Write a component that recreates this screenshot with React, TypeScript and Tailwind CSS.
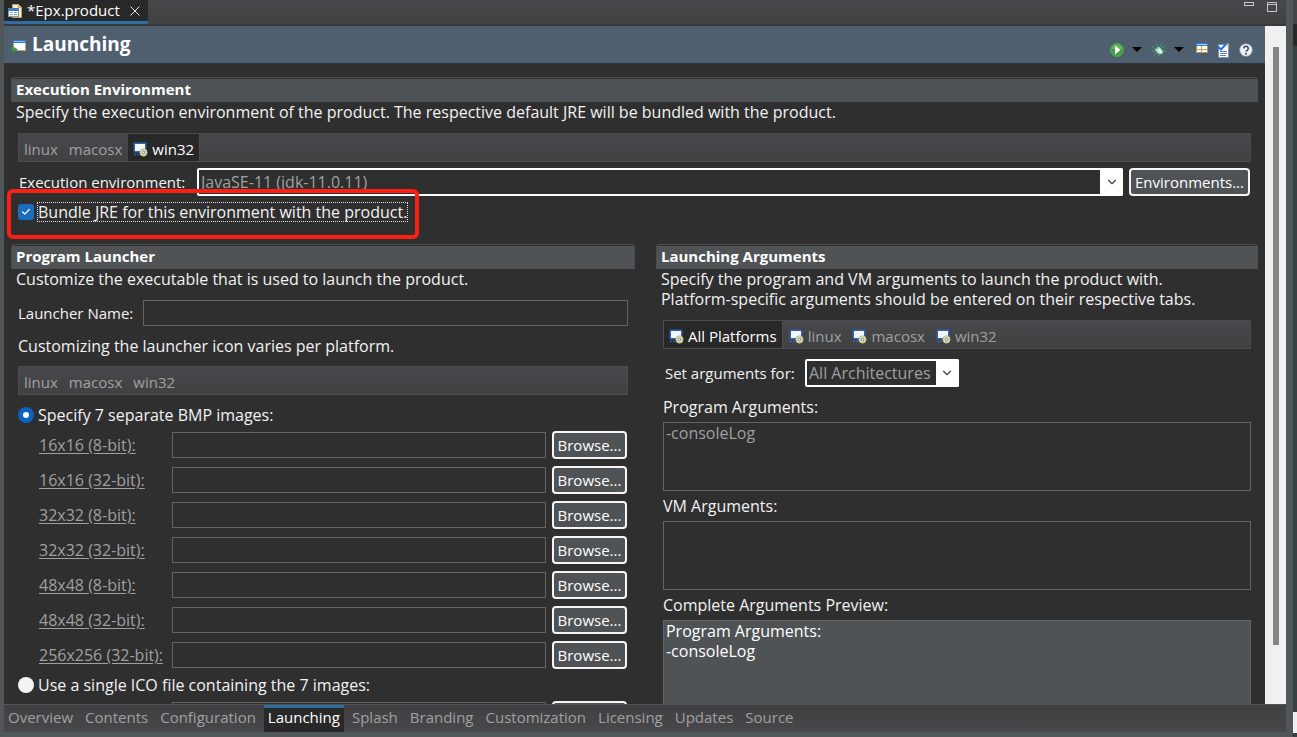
import { useState } from "react";
import type { ReactNode } from "react";
import { Check, ChevronDown } from "lucide-react";
import clsx from "clsx";

const PAGES = [
  "Overview",
  "Contents",
  "Configuration",
  "Launching",
  "Splash",
  "Branding",
  "Customization",
  "Licensing",
  "Updates",
  "Source",
];

const BMP_IMAGES = [
  "16x16 (8-bit):",
  "16x16 (32-bit):",
  "32x32 (8-bit):",
  "32x32 (32-bit):",
  "48x48 (8-bit):",
  "48x48 (32-bit):",
  "256x256 (32-bit):",
];

function ProductFileIcon() {
  return (
    <svg width="15" height="16" viewBox="0 0 15 16" className="shrink-0">
      <path d="M4.5 1.5h6L13.5 4.5V14.5H4.5z" fill="#f4ecd8" stroke="#c9a45c" />
      <path d="M10.5 1.5v3h3" fill="#e2bd72" stroke="#c9a45c" />
      <rect x="0.5" y="5.5" width="10" height="8" fill="#fff" stroke="#7d9cc4" />
      <rect x="0" y="5" width="11" height="3" fill="#3f7cc0" />
      <path d="M2 9.5h3M6 9.5h3M2 11.5h3M6 11.5h3" stroke="#8fa9c8" />
    </svg>
  );
}

function LaunchingIcon() {
  return (
    <svg width="16" height="16" viewBox="0 0 16 16" className="shrink-0">
      <rect x="2.5" y="3.5" width="12" height="10" fill="#fff" stroke="#b8a57a" />
      <rect x="2" y="3" width="13" height="3" fill="#2f79c4" />
      <path d="M3 4.5h11" stroke="#8fc1ee" />
      <path d="M0.5 9v6.500l6-3z" fill="#3f9a4c" stroke="#2d7a3a" strokeWidth="0.5" />
    </svg>
  );
}

function PlatformIcon() {
  return (
    <svg width="15" height="15" viewBox="0 0 15 15" className="shrink-0">
      <rect x="0.5" y="0.5" width="13" height="10" rx="1" fill="#2f62b0" />
      <rect x="2" y="2" width="10" height="7" fill="#f3f7fd" />
      <path d="M1 12.5h6" stroke="#2f62b0" strokeWidth="1.5" strokeDasharray="2 1" />
      <circle cx="10.5" cy="10.5" r="3.7" fill="#ece7a8" stroke="#aaa565" strokeWidth="0.7" />
      <circle cx="10.5" cy="10.5" r="1.4" fill="#fff" stroke="#5278b5" />
    </svg>
  );
}

function RunIcon() {
  return (
    <svg width="14" height="14" viewBox="0 0 14 14">
      <circle cx="7" cy="7" r="6.4" fill="#3fa045" stroke="#4fae55" />
      <path d="M1.5 6a5.6 5.6 0 0 1 11 0z" fill="#7cc46c" opacity="0.6" />
      <path d="M5 2.5v9L10.5 7z" fill="#fff" />
    </svg>
  );
}

function DebugIcon() {
  return (
    <svg width="16" height="16" viewBox="0 0 16 16">
      <path
        d="M6.5 3.500L5.500 0.500M9.500 4.500l1-3.500M3.500 6.500L0.500 4M4.500 9H0.500M5.500 11.500L2.500 13.500M8 12.500v3M11 12.500l2 2M12.500 9h3M11 6l3-2"
        stroke="#5fa890"
        strokeDasharray="1.5 1"
        fill="none"
      />
      <ellipse
        cx="8"
        cy="8.4"
        rx="5"
        ry="3.3"
        transform="rotate(45 8 8.4)"
        fill="#a9dcbf"
        stroke="#2c7a6b"
      />
      <path d="M7.5 7.500l3 3" stroke="#eafbe2" strokeWidth="2" />
      <circle cx="5" cy="5.3" r="1.5" fill="#2c7a6b" />
    </svg>
  );
}

function ExportIcon() {
  return (
    <svg width="16" height="16" viewBox="0 0 16 16">
      <rect x="3.5" y="1.5" width="11" height="9" fill="#fffbe8" stroke="#a99962" />
      <rect x="3" y="1" width="12" height="3" fill="#2f79d0" />
      <path d="M4 2.5h10" stroke="#a9d2f5" />
      <path d="M4 7.5h10M8.5 4v6" stroke="#b3a570" />
      <path d="M0 12.5h3.500M3.500 12v3.500M1 12l2.500 2.500" stroke="#2b69a8" fill="none" />
    </svg>
  );
}

function ValidateIcon() {
  return (
    <svg width="14" height="16" viewBox="0 0 14 16">
      <path d="M1.5 2.5h10v13h-10z" fill="#fff" stroke="#7890b5" />
      <path d="M8 1.5h3.500V5" fill="#e8c67a" stroke="#c9a45c" />
      <path d="M3 9.5h7M3 11.5h7M3 13.5h6" stroke="#6c7fa6" />
      <path d="M1 4.500L4 7.500L10 1" stroke="#1578e6" strokeWidth="2" fill="none" />
    </svg>
  );
}

function HelpIcon() {
  return (
    <svg width="14" height="14" viewBox="0 0 14 14">
      <circle cx="7" cy="7" r="6.3" fill="#f2f3f6" stroke="#8d99b0" strokeWidth="0.8" />
      <path
        d="M4.8 5.4a2.2 2.2 0 1 1 3.4 1.900c-.8.5-1.2.8-1.2 1.500"
        stroke="#3c4a63"
        strokeWidth="1.6"
        fill="none"
      />
      <circle cx="7" cy="10.8" r="1" fill="#3c4a63" />
    </svg>
  );
}

function MenuArrow() {
  return (
    <svg width="10" height="5" viewBox="0 0 10 5">
      <path d="M0 0h10L5 5z" fill="#000" />
    </svg>
  );
}

type SectionProps = {
  title: string;
  description: string;
  children: ReactNode;
};

function Section({ title, description, children }: SectionProps) {
  return (
    <section className="min-w-0">
      <div className="rounded-t-sm border border-b-0 border-[#4a4d4f] pt-px">
        <h2 className="h-[23px] bg-[#4f5355] px-1 text-[15px] leading-5 font-bold text-white">
          {title}
        </h2>
      </div>
      <p className="px-[5px] text-base leading-5 whitespace-pre-line">{description}</p>
      <div className="pt-[11px] pr-[7px] pl-2">{children}</div>
    </section>
  );
}

type PlatformTabsProps = {
  tabs: string[];
  initial?: string;
  icons?: "all" | "selected" | "none";
};

function PlatformTabs({ tabs, initial, icons = "none" }: PlatformTabsProps) {
  const [selected, setSelected] = useState(initial);

  return (
    <div
      role="tablist"
      className="-ml-px flex h-[29px] gap-px border border-[#4c4c50] bg-linear-to-b from-[#48484c] to-[#414143]"
    >
      {tabs.map((tab) => (
        <button
          key={tab}
          role="tab"
          aria-selected={tab === selected}
          onClick={() => setSelected(tab)}
          className={clsx(
            "flex items-center gap-1 px-[5px] pt-1",
            tab === selected
              ? "border-r border-[#4c4c50] bg-[#282828] text-white"
              : "text-[#a0a0a0]"
          )}
        >
          {(icons === "all" || (icons === "selected" && tab === selected)) && (
            <PlatformIcon />
          )}
          {tab}
        </button>
      ))}
    </div>
  );
}

type ComboProps = {
  id: string;
  value: string;
  className?: string;
};

function Combo({ id, value, className }: ComboProps) {
  return (
    <div className={clsx("relative h-7", className)}>
      <select
        id={id}
        className="h-full w-full appearance-none rounded-xs border-2 border-white bg-[#2f2f2f] pl-0.5 text-base text-[#a0a0a0]"
      >
        <option>{value}</option>
      </select>
      <span className="pointer-events-none absolute inset-y-0 right-0 flex w-[23px] items-center justify-center rounded-r-xs bg-white">
        <ChevronDown size={14} strokeWidth={2} className="text-[#444]" />
      </span>
    </div>
  );
}

function PushButton({ children, className }: { children?: ReactNode; className?: string }) {
  return (
    <button
      className={clsx(
        "h-7 shrink-0 rounded-[4px] border-2 border-[#f5f5f5] bg-[#4f5355] text-white",
        className
      )}
    >
      {children}
    </button>
  );
}

function ImageRow({ label }: { label?: string }) {
  return (
    <div className="flex h-7 items-center pr-px pl-[21px]">
      <div className="w-[133px] shrink-0">
        {label && (
          <a href="#" className="text-base text-[#a0a0a0] underline underline-offset-2">
            {label}
          </a>
        )}
      </div>
      <input
        type="text"
        aria-label={label ?? "ICO file"}
        className="h-[26px] min-w-0 flex-1 border border-[#646464] bg-transparent px-1"
      />
      <PushButton className="ml-1.5 w-[75px]">{label && "Browse..."}</PushButton>
    </div>
  );
}

function ImageRadio({ id, label, checked }: { id: string; label: string; checked?: boolean }) {
  return (
    <div className="flex h-5 items-center gap-1">
      <input
        type="radio"
        name="icon-source"
        id={id}
        defaultChecked={checked}
        className="size-4 appearance-none rounded-full bg-[#f3f3f3] checked:border-5 checked:border-[#0c62bd] checked:bg-white"
      />
      <label htmlFor={id} className="text-base leading-5">
        {label}
      </label>
    </div>
  );
}

function ExecutionEnvironment() {
  return (
    <Section
      title="Execution Environment"
      description="Specify the execution environment of the product. The respective default JRE will be bundled with the product."
    >
      <PlatformTabs tabs={["linux", "macosx", "win32"]} initial="win32" icons="selected" />
      <div className="mt-1.5 flex items-center pr-px">
        <label htmlFor="environment" className="w-[178px] shrink-0">
          Execution environment:
        </label>
        <Combo id="environment" value="JavaSE-11 (jdk-11.0.11)" className="min-w-0 flex-1" />
        <PushButton className="ml-1.5 w-[121px]">Environments...</PushButton>
      </div>
      <div className="relative mt-1.5 flex h-5 items-center">
        <span className="relative -ml-px size-4">
          <input
            type="checkbox"
            id="bundle"
            defaultChecked
            className="peer block size-4 appearance-none rounded-[3px] bg-[#f3f3f3] checked:bg-[#1a6cbd]"
          />
          <Check
            size={10}
            strokeWidth={3}
            className="pointer-events-none absolute top-[3px] left-[3px] hidden text-white peer-checked:block"
          />
        </span>
        <label
          htmlFor="bundle"
          className="ml-[3px] border border-dotted border-[#e0e0e0] text-base leading-[18px]"
        >
          Bundle JRE for this environment with the product.
        </label>
        <span className="pointer-events-none absolute -top-[13px] -left-3 h-[50px] w-[412px] rounded-md border-4 border-[#fb2013]" />
      </div>
    </Section>
  );
}

function ProgramLauncher() {
  return (
    <Section
      title="Program Launcher"
      description="Customize the executable that is used to launch the product."
    >
      <div className="-ml-px flex items-center">
        <label htmlFor="launcher-name" className="w-[125px] shrink-0">
          Launcher Name:
        </label>
        <input
          id="launcher-name"
          type="text"
          className="h-[26px] min-w-0 flex-1 border border-[#646464] bg-transparent px-1"
        />
      </div>
      <p className="my-2.5 -ml-px text-base leading-5">
        Customizing the launcher icon varies per platform.
      </p>
      <PlatformTabs tabs={["linux", "macosx", "win32"]} />
      <div className="mt-2.5 -ml-px flex flex-col">
        <ImageRadio id="bmp" label="Specify 7 separate BMP images:" checked />
        <div className="my-1.5 flex flex-col gap-[7px]">
          {BMP_IMAGES.map((label) => (
            <ImageRow key={label} label={label} />
          ))}
        </div>
        <ImageRadio id="ico" label="Use a single ICO file containing the 7 images:" />
        <div className="mt-1.5">
          <ImageRow />
        </div>
      </div>
    </Section>
  );
}

function LaunchingArguments() {
  return (
    <Section
      title="Launching Arguments"
      description={
        "Specify the program and VM arguments to launch the product with.\nPlatform-specific arguments should be entered on their respective tabs."
      }
    >
      <PlatformTabs
        tabs={["All Platforms", "linux", "macosx", "win32"]}
        initial="All Platforms"
        icons="all"
      />
      <div className="mt-2.5 flex items-center">
        <label htmlFor="architecture" className="w-[141px] shrink-0 pl-px">
          Set arguments for:
        </label>
        <Combo id="architecture" value="All Architectures" className="w-[154px]" />
      </div>
      <div className="-ml-px flex flex-col text-base">
        <label htmlFor="program-args" className="mt-2.5 mb-[5px] leading-5">
          Program Arguments:
        </label>
        <textarea
          id="program-args"
          defaultValue="-consoleLog"
          className="h-[69px] resize-none border border-[#646464] bg-transparent px-0.5 leading-5 text-[#a0a0a0]"
        />
        <label htmlFor="vm-args" className="my-[5px] leading-5">
          VM Arguments:
        </label>
        <textarea
          id="vm-args"
          className="h-[69px] resize-none border border-[#646464] bg-transparent px-0.5 leading-5 text-[#a0a0a0]"
        />
        <label htmlFor="preview" className="my-[5px] leading-5">
          Complete Arguments Preview:
        </label>
        <textarea
          id="preview"
          readOnly
          value={"Program Arguments:\n-consoleLog"}
          className="h-[120px] resize-none border border-[#646464] bg-[#4f5355] px-0.5 leading-5 text-white"
        />
      </div>
    </Section>
  );
}

export default function App() {
  const [page, setPage] = useState("Launching");

  return (
    <div className="flex h-screen overflow-hidden bg-[#515658] pl-1 font-['Open_Sans','Noto_Sans',sans-serif] text-[15px] text-[#f2f2f2]">
      <main className="flex min-w-0 flex-1 flex-col pb-[5px]">
        <div className="flex h-[26px] shrink-0 justify-between border-b-2 border-[#38383b] bg-linear-to-b from-[#48484c] to-[#414143]">
          <div className="flex w-36 items-center gap-1 border-b-3 border-[#2f6ea5] bg-[#282828] pl-1 text-white">
            <ProductFileIcon />
            <span>*Epx.product</span>
            <button aria-label="Close" className="ml-1.5">
              <svg width="10" height="10" viewBox="0 0 10 10">
                <path d="M0.5 0.5l9 9M9.5 0.5l-9 9" stroke="#e6e6e6" />
              </svg>
            </button>
          </div>
          <div className="flex items-start gap-[13px] pt-0.5 pr-[9px]">
            <button aria-label="Minimize">
              <svg width="10" height="10" viewBox="0 0 10 10">
                <rect x="0.5" y="0.5" width="9" height="3" fill="none" stroke="#c8c8c8" />
              </svg>
            </button>
            <button aria-label="Maximize">
              <svg width="10" height="10" viewBox="0 0 10 10">
                <path d="M0.5 0.5h9v9h-9zM0 2.5h10" fill="none" stroke="#c8c8c8" />
              </svg>
            </button>
          </div>
        </div>

        <div className="flex min-h-0 flex-1">
          <div className="flex min-w-0 flex-1 flex-col overflow-hidden bg-[#2f2f2f]">
            <header className="flex h-[38px] shrink-0 items-center justify-between border-b border-[#2b3440] bg-[#4f5f70] pr-3 pl-[7px]">
              <div className="flex items-center gap-[5px]">
                <LaunchingIcon />
                <h1 className="text-[19px] leading-none font-bold text-white">Launching</h1>
              </div>
              <div className="flex items-center pt-2.5">
                <button aria-label="Run" className="mr-2">
                  <RunIcon />
                </button>
                <button aria-label="Run options" className="mr-[9px]">
                  <MenuArrow />
                </button>
                <button aria-label="Debug" className="mr-[7px]">
                  <DebugIcon />
                </button>
                <button aria-label="Debug options" className="mr-[9px]">
                  <MenuArrow />
                </button>
                <button aria-label="Export" className="mr-2">
                  <ExportIcon />
                </button>
                <button aria-label="Validate" className="mr-2">
                  <ValidateIcon />
                </button>
                <button aria-label="Help">
                  <HelpIcon />
                </button>
              </div>
            </header>
            <div className="flex flex-col gap-[22px] px-[7px] pt-[13px]">
              <ExecutionEnvironment />
              <div className="grid grid-cols-[625fr_603fr] gap-[21px]">
                <ProgramLauncher />
                <LaunchingArguments />
              </div>
            </div>
          </div>
          <div className="w-[21px] shrink-0 bg-[#f0f0f0] pt-[21px] pb-[59px]">
            <div className="mx-auto h-full w-1.5 bg-[#858585]" />
          </div>
        </div>

        <nav className="flex h-7 shrink-0 gap-1 border-t border-[#515156] bg-linear-to-b from-[#404042] to-[#48484c]">
          {PAGES.map((name) => (
            <button
              key={name}
              onClick={() => setPage(name)}
              className={clsx(
                "border-t-3 px-1 pb-1.5 leading-[18px]",
                name === page
                  ? "border-[#2f6ea5] bg-[#282828] text-white"
                  : "border-transparent text-[#a0a0a0]"
              )}
            >
              {name}
            </button>
          ))}
        </nav>
      </main>
      <div className="w-[7px] shrink-0" />
      <aside className="flex w-1 shrink-0 flex-col bg-[#3a3f41]">
        <div className="h-6 bg-[#454548]" />
        <div className="h-[22px] bg-[#282828]" />
        <div className="flex-1" />
        <div className="mb-1 h-[21px] bg-[#f0f0f0]" />
      </aside>
    </div>
  );
}
